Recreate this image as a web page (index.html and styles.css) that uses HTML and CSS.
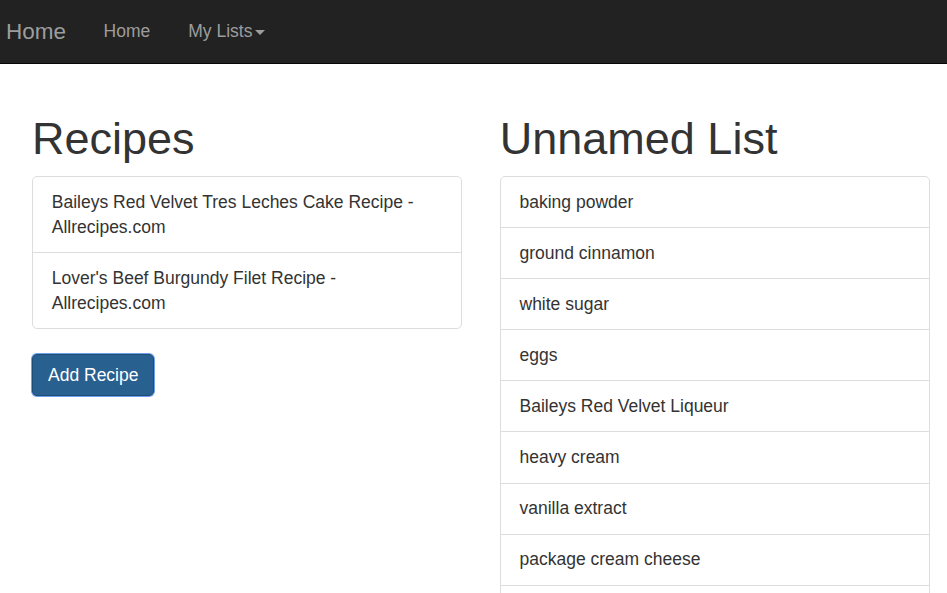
FILE: index.html
```html
<!DOCTYPE html>
<html>
<head>
<meta charset="utf-8">
<link rel="stylesheet" href="styles.css">
</head>
<body>
<nav class="navbar">
  <a class="brand" href="#">Home</a>
  <ul class="nav">
    <li><a href="#">Home</a></li>
    <li><a href="#">My Lists<span class="caret"></span></a></li>
  </ul>
</nav>
<main class="page">
  <section class="col">
    <h1>Recipes</h1>
    <ul class="list-group">
      <li class="item">Baileys Red Velvet Tres Leches Cake Recipe - Allrecipes.com</li>
      <li class="item">Lover's Beef Burgundy Filet Recipe - Allrecipes.com</li>
    </ul>
    <button class="btn" type="button">Add Recipe</button>
  </section>
  <section class="col">
    <h1>Unnamed List</h1>
    <ul class="list-group">
      <li class="item">baking powder</li>
      <li class="item">ground cinnamon</li>
      <li class="item">white sugar</li>
      <li class="item">eggs</li>
      <li class="item">Baileys Red Velvet Liqueur</li>
      <li class="item">heavy cream</li>
      <li class="item">vanilla extract</li>
      <li class="item">package cream cheese</li>
      <li class="item item-empty"></li>
    </ul>
  </section>
</main>
</body>
</html>
```

FILE: styles.css
```css
* { box-sizing: border-box; }
html, body { margin: 0; padding: 0; }
body {
  font-family: "Liberation Sans", Arial, sans-serif;
  font-size: 17.5px;
  line-height: 25px;
  color: #333;
  background: #fff;
}
.navbar {
  display: flex;
  align-items: center;
  height: 64px;
  background: #222;
  border-bottom: 1px solid #080808;
}
.brand {
  font-size: 22.5px;
  line-height: 25px;
  color: #9d9d9d;
  text-decoration: none;
  padding: 0 18.5px 0 6px;
}
.nav {
  display: flex;
  list-style: none;
  margin: 0;
  padding: 0;
}
.nav a {
  display: block;
  color: #9d9d9d;
  text-decoration: none;
  padding: 0 19px;
}
.caret {
  display: inline-block;
  width: 0;
  height: 0;
  margin-left: 2.5px;
  vertical-align: middle;
  border-top: 5px solid #9d9d9d;
  border-left: 5px solid transparent;
  border-right: 5px solid transparent;
}
.page {
  display: grid;
  grid-template-columns: 1fr 1fr;
  column-gap: 37.5px;
  padding: 50px 17px 0 32px;
}
.col { min-width: 0; }
h1 {
  font-size: 45px;
  font-weight: 500;
  line-height: 49.5px;
  margin: 0 0 12.5px;
}
.list-group {
  list-style: none;
  margin: 0 0 25px;
  padding: 0;
  border: 1px solid #ddd;
  border-radius: 5px;
}
.item {
  padding: 12.56px 18.75px;
  border-top: 1px solid #ddd;
}
.item:first-child { border-top: 0; }
.item-empty { min-height: 51px; }
.btn {
  font-family: inherit;
  font-size: 17.5px;
  line-height: 25px;
  color: #fff;
  background: #286090;
  border: 1px solid #204d74;
  border-radius: 5px;
  padding: 7.5px 15px;
  margin: 0;
  box-shadow: 0 0 0 1px #6ea0ee;
  cursor: pointer;
}
```
